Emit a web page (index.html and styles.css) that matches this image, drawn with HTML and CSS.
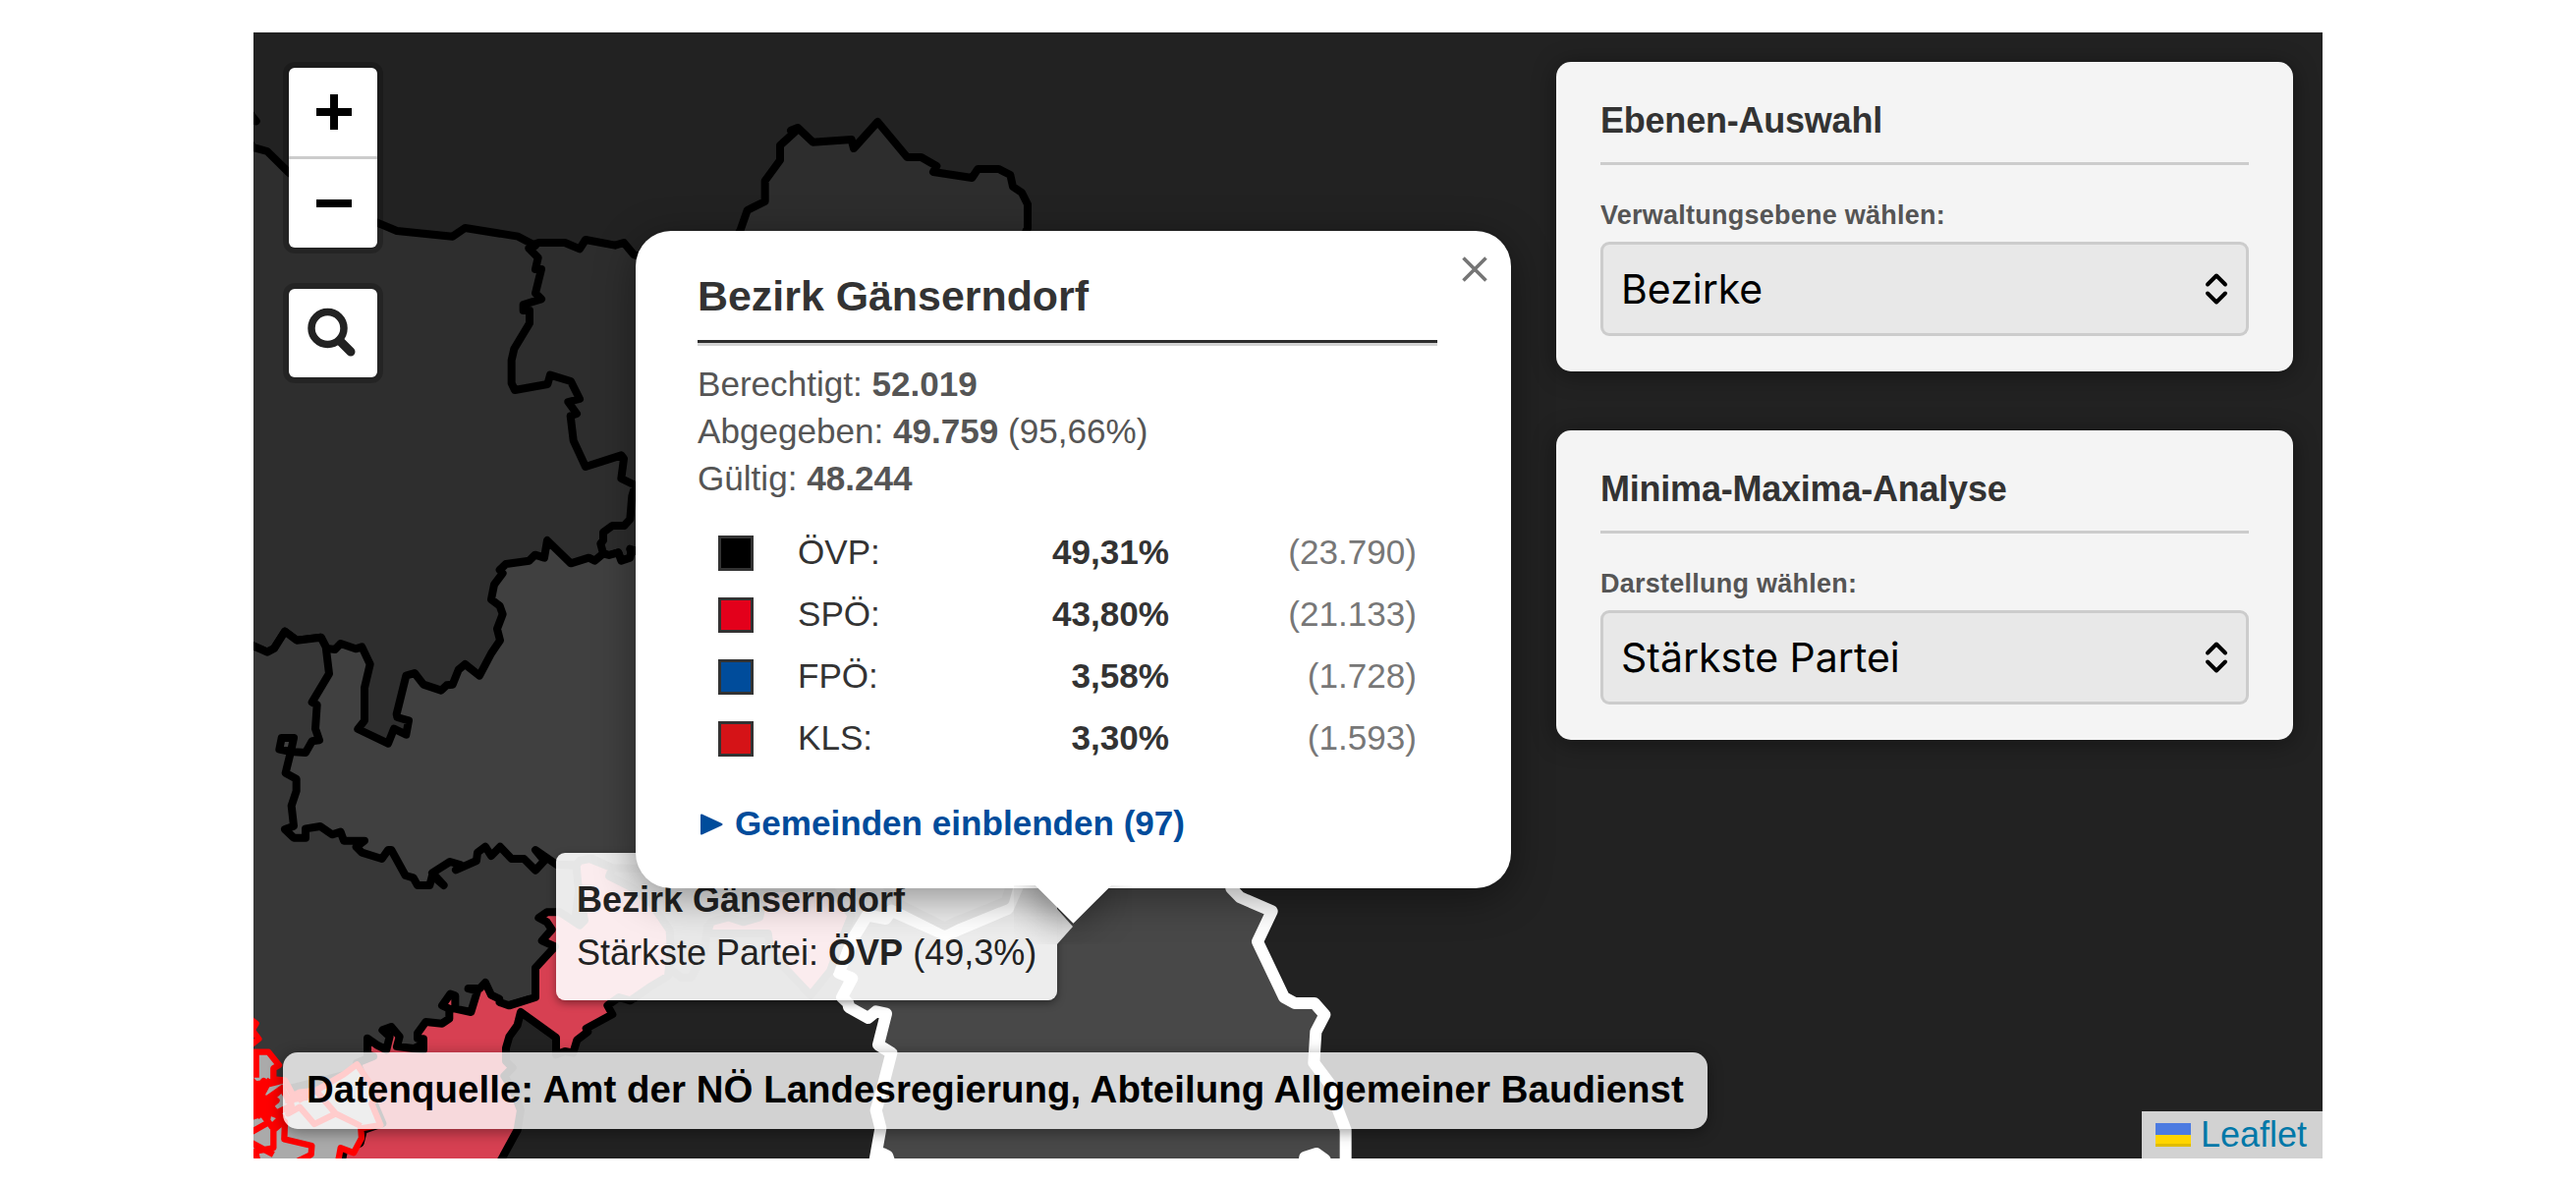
FILE: index.html
```html
<!DOCTYPE html>
<html lang="de">
<head>
<meta charset="utf-8">
<title>Wahlkarte Niederösterreich</title>
<link rel="stylesheet" href="styles.css">
</head>
<body>
<main class="map">
  <svg class="map-layer" viewBox="24 39 6318 3438" aria-hidden="true">
    <g class="district">
      <path fill="#2d2d2d" d="M870 690L895 681 975 681 1020 700 1038 672 1128 689 1155 681 1185 717 1300 760 1450 740 1510 645 1532 582 1586 555 1586 492 1632 429 1632 384 1678 342 1665 338 1686 330 1732 374 1850 366 1857 393 1930 312 2020 420 2063 420 2110 447 2100 465 2218 483 2236 456 2300 456 2335 474 2343 510 2370 528 2388 564 2388 636 2350 720 2350 1600 1300 1640 1178 1620 1174 1643 1147 1652 1138 1627 1110 1635 1092 1630 1040 1550 900 1400 700 1200 700 900z"/>
      <path fill="#404040" d="M245 1915L300 1700 700 1600 1040 1560 1092 1630 1110 1635 1138 1627 1147 1652 1174 1643 1178 1620 1300 1640 2400 1700 2400 2640 2327 2720 2173 2780 2140 2795 1972 2720 1500 2600 1120 2590 1060 2562 1020 2582 950 2580 885 2597 560 2700 147 2600 60 2490 60 2000z"/>
      <path fill="#2e2e2e" d="M-20 340L24 390 66 402 132 467 270 570 402 620 462 645 632 662 670 636 832 662 885 690 865 698 893 727 885 762 903 762 885 835 903 853 848 870 848 888 867 888 867 927 820 1005 812 1040 812 1110 822 1131 922 1113 930 1085 993 1104 1020 1158 985 1167 1011 1203 992 1210 1001 1285 1038 1365 1147 1330 1155 1340 1147 1401 1190 1422 1180 1455 1174 1525 1156 1545 1120 1545 1092 1565 1092 1590 1084 1600 1092 1630 1066 1652 1048 1643 993 1660 921 1590 912 1643 884 1634 866 1652 795 1662 776 1680 785 1690 759 1725 750 1770 776 1790 785 1815 768 1860 777 1895 750 1935 714 2003 670 1968 650 1985 632 2030 614 2032 597 2048 543 2030 516 1995 490 2003 461 2120 463 2130 498 2140 490 2183 453 2165 435 2210 343 2166 363 2140 363 2040 380 1968 355 1915 336 1921 290 1905 273 1923 248 1920 230 1886 156 1895 120 1868 87 1920 66 1931 24 1912 -20 1905z"/>
      <path fill="#373737" d="M-20 1905L24 1912 66 1931 87 1920 120 1868 156 1895 230 1886 245 1915 255 1997 203 2084 218 2092 213 2165 225 2200 203 2203 183 2238 138 2235 147 2193 110 2193 103 2228 138 2235 122 2300 155 2318 155 2355 140 2400 147 2462 120 2472 147 2498 183 2498 183 2470 228 2463 264 2488 290 2480 300 2507 363 2507 338 2526 355 2543 416 2562 435 2535 445 2535 488 2613 512 2620 525 2643 562 2643 570 2613 605 2643 570 2605 624 2571 655 2580 642 2596 705 2568 708 2543 732 2525 750 2553 777 2525 812 2562 850 2562 885 2597 912 2568 885 2535 950 2580 1010 2582 1020 2640 1000 2800 885 2985 800 3010 600 3100 390 3200 150 3260 -20 3300z"/>
      <path fill="none" d="M0 270L32 310M-10 350L24 300M1174 1616L1200 1625"/>
      <path fill="#d74052" d="M1010 2582L1020 2568 1050 2562 1120 2590 1110 2615 1180 2650 1240 2700 1295 2780 1298 2840 1290 2920 1240 2950 1175 2995 1140 2985 1105 3010 1120 3037 1040 3080 1045 3090 1012 3115 1000 3155 975 3150 948 3160 948 3108 840 3030 830 3070 805 3105 795 3140 795 3180 815 3200 790 3225 815 3265 840 3330 830 3390 770 3500 290 3500 300 3455 350 3430 360 3390 418 3370 340 3185 390 3165 372 3160 372 3110 400 3130 430 3145 440 3105 418 3085 445 3075 470 3105 462 3135 543 3145 543 3112 525 3110 525 3095 550 3060 600 3065 622 3050 622 3020 600 3010 625 2975 640 2980 640 3020 688 3030 708 2965 680 2958 715 2958 732 2940 750 2978 775 2990 775 3000 805 3010 885 2985 885 2895 945 2830 905 2812 935 2778 920 2755 895 2742 920 2725 960 2725 1020 2765 1035 2750 1015 2640z"/>
      <path fill="none" d="M1298 2900L1330 2925 1360 2925 1400 2850 1410 2770"/>
    </g>
    <g class="selected">
      <path d="M1811 2910L1858 2800 1898 2735 1955 2745 1972 2720 2140 2795 2173 2780 2327 2715 2360 2640 2600 2450 2980 2450 3010 2652 3037 2680 3134 2722 3090 2815 3171 2985 3204 3003 3264 3003 3295 3038 3268 3090 3262 3185 3311 3250 3325 3300 3359 3390 3359 3520 1915 3520 1939 3385 1925 3330 1945 3260 1972 3155 1932 3130 1956 3035 1925 3028 1901 3048 1842 3015 1840 3003 1821 2985 1852 2927z"/>
      <path d="M1930 3500L1945 3462 1960 3470 1970 3500zM3230 3500L3235 3473 3270 3462 3295 3480 3305 3500z"/>
    </g>
    <g class="district">
      <path fill="#d74052" d="M1410 2790L1420 2755 1475 2740 1520 2755 1570 2740 1585 2652 1785 2652 1850 2735 1812 2830 1785 2905 1725 2978 1604 2850 1595 2790z"/>
      <path fill="#404040" d="M1930 2600L1985 2692 2135 2768 2170 2750 2320 2690 2345 2600z"/>
    </g>
    <g class="gemeinden">
      <path fill="#aaa" d="M24 3152L70 3152 102 3192 85 3202 85 3235 120 3238 145 3285 165 3275 215 3270 300 3220 340 3190 405 3285 385 3310 412 3375 352 3385 354 3415 330 3460 290 3445 280 3500 0 3500 0 3152z"/>
      <path d="M0 3040L32 3065 20 3085 40 3112 10 3135M32 3152V3230M0 3220L30 3250 110 3240 30 3260 100 3345 20 3280 55 3240 30 3340 115 3260 30 3320 110 3350 80 3380 20 3300M20 3350L70 3335 65 3370 20 3395M75 3235L45 3290 95 3300 35 3350M115 3270L140 3315 90 3340 120 3365 118 3418 202 3438 200 3465 160 3485 195 3500M115 3365L85 3390 85 3445 30 3455 40 3500M20 3430L85 3465M145 3285L130 3340 165 3320 210 3372 275 3340 352 3378M160 3300L215 3270 275 3340M120 3300L190 3290"/>
    </g>
  </svg>

  <div class="controls">
    <div class="bar">
      <button class="tool" aria-label="Vergrößern"><svg viewBox="0 0 90 90"><path d="M28 45H64M46 27V63" stroke="#000" stroke-width="8"/></svg></button>
      <button class="tool" aria-label="Verkleinern"><svg viewBox="0 0 90 90"><path d="M28 45H64" stroke="#000" stroke-width="8"/></svg></button>
    </div>
    <div class="bar">
      <button class="tool" aria-label="Suchen"><svg viewBox="0 0 90 90" fill="none" stroke="#222" stroke-linecap="round"><circle cx="39.500" cy="40" r="16.500" stroke-width="7.500"/><path d="M52 53L63 64" stroke-width="9"/></svg></button>
    </div>
  </div>

  <div class="source">Datenquelle: Amt der NÖ Landesregierung, Abteilung Allgemeiner Baudienst</div>

  <aside class="panels">
    <section class="panel">
      <h2>Ebenen-Auswahl</h2>
      <span class="label">Verwaltungsebene wählen:</span>
      <div class="select"><span>Bezirke</span><svg viewBox="0 0 24 34"><path d="M3 12.500L12 3.500 21 12.500M3 21.500L12 30.500 21 21.500"/></svg></div>
    </section>
    <section class="panel">
      <h2>Minima-Maxima-Analyse</h2>
      <span class="label">Darstellung wählen:</span>
      <div class="select"><span>Stärkste Partei</span><svg viewBox="0 0 24 34"><path d="M3 12.500L12 3.500 21 12.500M3 21.500L12 30.500 21 21.500"/></svg></div>
    </section>
  </aside>

  <div class="tooltip"><b>Bezirk Gänserndorf</b><br>Stärkste Partei: <b>ÖVP</b> (49,3%)</div>

  <article class="popup">
    <div class="popup-body">
      <h1>Bezirk Gänserndorf</h1>
      <div class="rule"></div>
      <div class="stats">Berechtigt: <b>52.019</b><br>Abgegeben: <b>49.759</b> (95,66%)<br>Gültig: <b>48.244</b></div>
      <div class="results">
        <div class="row"><i class="swatch oevp"></i><span>ÖVP:</span><b>49,31%</b><span class="votes">(23.790)</span></div>
        <div class="row"><i class="swatch spoe"></i><span>SPÖ:</span><b>43,80%</b><span class="votes">(21.133)</span></div>
        <div class="row"><i class="swatch fpoe"></i><span>FPÖ:</span><b>3,58%</b><span class="votes">(1.728)</span></div>
        <div class="row"><i class="swatch kls"></i><span>KLS:</span><b>3,30%</b><span class="votes">(1.593)</span></div>
      </div>
      <div class="more"><svg viewBox="0 0 24 24"><path d="M2 2.500L22.500 12 2 21.500z"/></svg><span>Gemeinden einblenden (97)</span></div>
    </div>
    <div class="tip-box"><div class="tip"></div></div>
    <svg class="close" viewBox="0 0 28 28"><path d="M2.500 2.500L25.500 25.500M25.500 2.500L2.500 25.500"/></svg>
  </article>

  <div class="credit"><svg viewBox="0 0 12 8"><path fill="#4c7be1" d="M0 0h12v4H0z"/><path fill="#ffd500" d="M0 4h12v3H0z"/><path fill="#e0bc00" d="M0 7h12v1H0z"/></svg><span>Leaflet</span></div>
</main>
</body>
</html>
```
FILE: styles.css
```css
* { box-sizing: border-box; }

body {
  margin: 0;
  padding: 33px 258px 27px;
  background: #fff;
  font-family: "Liberation Sans", Arial, sans-serif;
  color: #333;
}

.map {
  position: relative;
  height: 1146px;
  overflow: hidden;
  background: #222;
}

.map-layer { display: block; width: 100%; height: 100%; }
.district path { stroke: #000; stroke-width: 24; stroke-linejoin: round; stroke-linecap: round; }
.selected path { fill: #484848; stroke: #fff; stroke-width: 36; stroke-linejoin: round; }
.gemeinden path { stroke: #f00; stroke-width: 19; stroke-linejoin: round; }
.gemeinden path + path { fill: none; }

.controls {
  position: absolute;
  top: 30px;
  left: 30px;
  display: flex;
  flex-direction: column;
  gap: 30px;
}
.bar {
  border: 6px solid rgba(0, 0, 0, .2);
  border-radius: 12px;
  background-clip: padding-box;
}
.tool {
  display: block;
  width: 90px;
  height: 90px;
  padding: 0;
  border: 0;
  border-radius: 6px;
  background: #fff;
}
.tool svg { display: block; width: 90px; height: 90px; }
.tool:first-child:not(:last-child) {
  height: 93px;
  border-bottom: 3px solid #ccc;
  border-radius: 6px 6px 0 0;
}
.tool + .tool { border-radius: 0 0 6px 6px; }

.source {
  position: absolute;
  left: 30px;
  bottom: 30px;
  width: 1450px;
  height: 78px;
  padding: 0 24px;
  border-radius: 15px;
  background: rgba(255, 255, 255, .8);
  box-shadow: 0 3px 15px rgba(0, 0, 0, .4);
  color: #000;
  font-size: 38.4px;
  font-weight: 700;
  letter-spacing: .065px;
  line-height: 76px;
  white-space: nowrap;
}

.panels {
  position: absolute;
  top: 30px;
  right: 30px;
  width: 750px;
  display: flex;
  flex-direction: column;
  gap: 60px;
}
.panel {
  height: 315px;
  padding: 36px 45px;
  border-radius: 15px;
  background: #f4f4f4;
  box-shadow: 0 3px 24px rgba(0, 0, 0, .4);
}
.panel h2 {
  height: 69px;
  margin: 0 0 36px;
  border-bottom: 3px solid #ccc;
  font-size: 36px;
  letter-spacing: -.22px;
  line-height: 48px;
}
.label {
  display: block;
  height: 42px;
  color: #555;
  font-size: 27px;
  font-weight: 700;
  letter-spacing: .25px;
  line-height: 31px;
}
.select {
  display: flex;
  align-items: center;
  justify-content: space-between;
  height: 96px;
  padding: 0 18px;
  border: 3px solid #ccc;
  border-radius: 9px;
  background: #e8e8e8;
  color: #000;
  font-family: Inter, sans-serif;
  font-size: 41px;
}
.select svg { width: 24px; height: 34px; fill: none; stroke: #000; stroke-width: 4; stroke-linecap: round; stroke-linejoin: round; }

.tooltip {
  position: absolute;
  top: 835px;
  left: 308px;
  width: 510px;
  height: 150px;
  padding: 21px;
  border-radius: 9px;
  background: rgba(255, 255, 255, .9);
  box-shadow: 0 3px 9px rgba(0, 0, 0, .4);
  color: #222;
  font-size: 36px;
  line-height: 54px;
  white-space: nowrap;
}
.tooltip::after {
  content: "";
  position: absolute;
  top: 57px;
  left: 100%;
  border: 18px solid transparent;
  border-left: 16px solid rgba(255, 255, 255, .9);
  border-right: 0;
}

.popup {
  position: absolute;
  top: 202px;
  left: 389px;
  width: 891px;
}
.popup-body {
  height: 669px;
  padding: 38px 75px 0 63px;
  border-radius: 36px;
  background: #fff;
  box-shadow: 0 9px 42px rgba(0, 0, 0, .4);
  font-size: 35.1px;
}
.popup h1 { margin: 0; font-size: 42.9px; line-height: 56px; }
.rule { height: 6px; margin-top: 17px; border-top: 3px solid #2c2c2c; border-bottom: 3px solid #d3d3d3; }
.stats { margin-top: 15px; color: #555; line-height: 48px; }
.results { margin-top: 19px; padding: 0 21px; }
.row {
  display: grid;
  grid-template-columns: 81px 140px 1fr 252px;
  align-items: center;
  height: 63px;
}
.row b { text-align: right; }
.row .votes { color: #777; text-align: right; }
.swatch { width: 36px; height: 36px; border: 3px solid #333; margin-top: 2px; }
.oevp { background: #000; }
.spoe { background: #e3001b; }
.fpoe { background: #004c9b; }
.kls { background: #d51317; }
.more { display: flex; align-items: center; margin-top: 35px; color: #004c9b; font-weight: 700; line-height: 42px; }
.more svg { width: 24px; height: 24px; margin: 2px 12px 0 2px; fill: #004c9b; stroke: #004c9b; stroke-width: 2; stroke-linejoin: round; }

.tip-box {
  position: absolute;
  left: 385px;
  top: 666px;
  width: 120px;
  height: 60px;
  overflow: hidden;
}
.tip {
  width: 57px;
  height: 57px;
  margin: -30px auto 0;
  background: #fff;
  box-shadow: 0 9px 42px rgba(0, 0, 0, .4);
  transform: rotate(45deg);
}
.close { position: absolute; top: 25px; right: 23px; width: 28px; height: 28px; stroke: #757575; stroke-width: 3.6; }

.credit {
  position: absolute;
  right: 0;
  bottom: 0;
  display: flex;
  align-items: center;
  gap: 10px;
  width: 184px;
  height: 48px;
  padding-left: 14px;
  background: rgba(255, 255, 255, .8);
  color: #0078a8;
  font-size: 36px;
  line-height: 48px;
}
.credit svg { width: 36px; height: 24px; }
```
